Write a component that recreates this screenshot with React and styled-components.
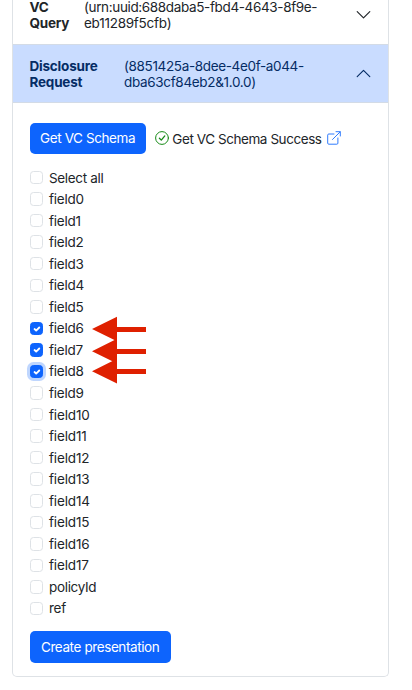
import React, { useState } from "react";
import styled, { createGlobalStyle } from "styled-components";

const GlobalStyle = createGlobalStyle`
  *, *::before, *::after { box-sizing: border-box; }
  body {
    margin: 0;
    background: #fff;
    color: #212529;
    font-family: Inter, "Liberation Sans", sans-serif;
    font-size: 13.5px;
    overflow: hidden;
  }
`;

const Page = styled.main`
  height: 690px;
  padding: 0 23px 0 12px;
  overflow: hidden;
`;

const Accordion = styled.section`
  height: 677px;
  border: 1px solid #dee2e6;
  border-top: 0;
  border-radius: 0 0 5px 5px;
  overflow: hidden;
`;

const Header = styled.header`
  display: flex;
  align-items: ${(p) => (p.$open ? "center" : "flex-start")};
  height: ${(p) => (p.$open ? 59 : 44)}px;
  padding: 0 17px 0 16.5px;
  line-height: 16px;
  color: ${(p) => (p.$open ? "#052c65" : "#212529")};
  background: ${(p) => (p.$open ? "#c9dcff" : "#fff")};
  border-top: ${(p) => (p.$open ? "1px solid #d3dbe6" : "0")};
  border-bottom: ${(p) => (p.$open ? "1px solid #d3dbe6" : "0")};
`;

const HeaderText = styled.div`
  display: flex;
  flex: 1;
  margin-top: ${(p) => p.$top || 0}px;
`;

const Title = styled.strong`
  width: ${(p) => p.$width}px;
  font-weight: 700;
  letter-spacing: -0.2px;
`;

const Identifier = styled.span`
  flex: 1;
  white-space: nowrap;
`;

const Line = styled.span`
  display: block;
  letter-spacing: ${(p) => p.$track || 0}px;
`;

const Chevron = styled.svg`
  flex: none;
  width: 15px;
  height: 15px;
  margin-top: ${(p) => p.$top || 0}px;
  fill: none;
  stroke: currentColor;
  stroke-width: 1.15;
  stroke-linecap: round;
  stroke-linejoin: round;
`;

const Body = styled.div`
  padding: 19.6px 17px 0 16.5px;
`;

const Actions = styled.div`
  display: flex;
  align-items: center;
  height: 31.3px;
`;

const Button = styled.button`
  width: ${(p) => p.$width}px;
  height: 31.3px;
  padding: 0;
  border: 0;
  border-radius: 5px;
  background: #0d64fd;
  color: #fff;
  font: inherit;
  letter-spacing: -0.4px;
  white-space: nowrap;
`;

const Status = styled.span`
  display: flex;
  align-items: center;
  margin-left: 9px;
  white-space: nowrap;
`;

const StatusText = styled.span`
  width: 149px;
  margin: 1px 6px 0 3.5px;
  letter-spacing: -0.43px;
`;

const Icon = styled.svg`
  flex: none;
  width: 14px;
  height: 14px;
  fill: none;
  stroke: ${(p) => p.$color};
  stroke-linecap: round;
  stroke-linejoin: round;
`;

const Fields = styled.div`
  padding: 12.9px 0 12.1px;
`;

const Field = styled.label`
  display: flex;
  align-items: center;
  height: 21.55px;
  letter-spacing: ${(p) => p.$track}px;
`;

const Checkbox = styled.input`
  appearance: none;
  width: 13.5px;
  height: 13.5px;
  margin: 0;
  border: 1px solid ${(p) => (p.checked ? "#0d64fd" : "#dee2e6")};
  border-radius: 3.5px;
  background: ${(p) => (p.checked ? "#0d64fd" : "#fff")};
  box-shadow: ${(p) => (p.$focused ? "0 0 0 3px #bfd6fe" : "none")};
`;

const CheckCell = styled.span`
  display: grid;
  width: 19.5px;
  > * { grid-area: 1 / 1; }
`;

const Tick = styled.svg`
  width: 13.5px;
  height: 13.5px;
  pointer-events: none;
  fill: none;
  stroke: #fff;
  stroke-width: 1.9;
  stroke-linecap: round;
  stroke-linejoin: round;
`;

const Arrows = styled.svg`
  position: absolute;
  left: 92px;
  top: 316px;
  width: 55px;
  height: 68px;
  fill: #df2000;
`;

const fields = [
  "Select all",
  ...Array.from({ length: 18 }, (_, i) => `field${i}`),
  "policyId",
  "ref",
];

const tracking = (name) => {
  if (name === "Select all" || name === "policyId") return -0.33;
  return name.length > 6 ? -0.15 : -0.25;
};

export default function App() {
  const [selected, setSelected] = useState(["field6", "field7", "field8"]);
  const toggle = (name) =>
    setSelected((s) => (s.includes(name) ? s.filter((n) => n !== name) : [...s, name]));

  return (
    <Page>
      <GlobalStyle />
      <Accordion>
        <Header>
          <HeaderText $top={-1}>
            <Title $width={54.5}>VC<br />Query</Title>
            <Identifier>
              <Line $track={-0.36}>(urn:uuid:688daba5-fbd4-4643-8f9e-</Line>
              <Line $track={-0.25}>eb11289f5cfb)</Line>
            </Identifier>
          </HeaderText>
          <Chevron $top={7} viewBox="0 0 15 15"><path d="M1.2 4.6 7.5 10.9 13.8 4.6" /></Chevron>
        </Header>
        <Header $open>
          <HeaderText>
            <Title $width={94.5}>Disclosure<br />Request</Title>
            <Identifier>
              <Line $track={-0.35}>(8851425a-8dee-4e0f-a044-</Line>
              <Line $track={-0.33}>dba63cf84eb2&amp;1.0.0)</Line>
            </Identifier>
          </HeaderText>
          <Chevron viewBox="0 0 15 15"><path d="M1.2 10.7 7.5 4.4 13.8 10.7" /></Chevron>
        </Header>
        <Body>
          <Actions>
            <Button $width={116.3}>Get VC Schema</Button>
            <Status>
              <Icon $color="#168a16" viewBox="0 0 14 14">
                <circle cx="7" cy="7" r="6.4" />
                <path d="m4.4 7.2 1.9 1.9 3.5-4.2" strokeWidth="1.3" />
              </Icon>
              <StatusText>Get VC Schema Success</StatusText>
              <Icon $color="#2f7bfd" viewBox="0 0 14 14">
                <path d="M7 3H1.8Q.7 3 .7 4.1v8q0 1.1 1.1 1.1h8q1.1 0 1.1-1.1V7M9 .7h4.3V5M13.1.9 5.5 8.5" />
              </Icon>
            </Status>
          </Actions>
          <Fields>
            {fields.map((name) => (
              <Field key={name} $track={tracking(name)}>
                <CheckCell>
                  <Checkbox
                    type="checkbox"
                    checked={selected.includes(name)}
                    $focused={name === "field8"}
                    onChange={() => toggle(name)}
                  />
                  {selected.includes(name) && (
                    <Tick viewBox="0 0 14 14"><path d="m4.7 7.3 1.7 1.6 3.2-3.2" /></Tick>
                  )}
                </CheckCell>
                {name}
              </Field>
            ))}
          </Fields>
          <Button $width={141.3}>Create presentation</Button>
        </Body>
      </Accordion>
      <Arrows viewBox="0 0 55 68">
        <path d="M0 13 25 .7V11h29v5H25v9.3Z" />
        <path d="M0 35.2 25 22.8V33h29v5H25v9.5Z" />
        <path d="M0 55.2 25 42.8V53h29v5H25v9.5Z" />
      </Arrows>
    </Page>
  );
}
